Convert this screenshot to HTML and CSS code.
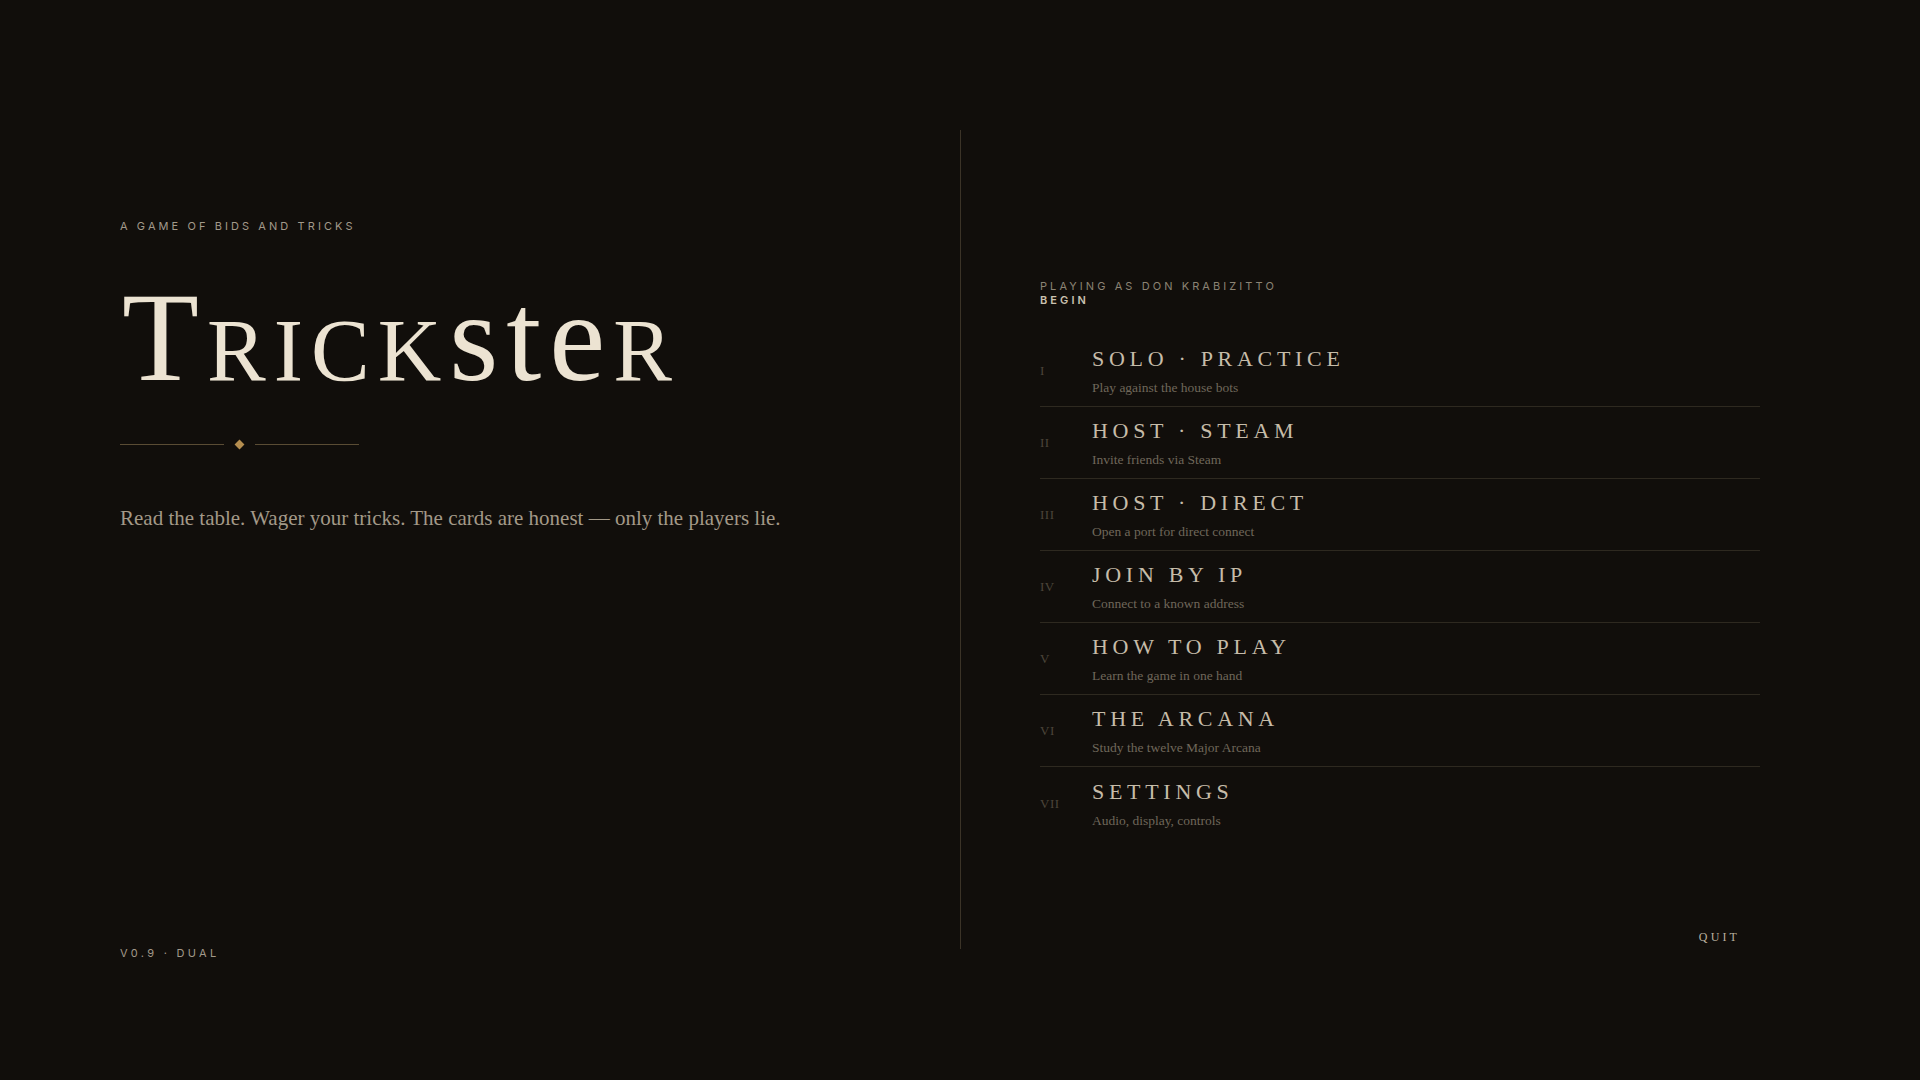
FILE: index.html
```html
<!DOCTYPE html>
<html lang="en">
<head>
<meta charset="utf-8">
<title>Trickster</title>
<link rel="stylesheet" href="styles.css">
</head>
<body>
<div class="screen">
  <section class="intro">
    <p class="eyebrow">A Game of Bids and Tricks</p>
    <h1 class="title">T<span class="sc">rick</span>ste<span class="sc">r</span></h1>
    <div class="ornament"><span class="rule"></span><span class="diamond"></span><span class="rule"></span></div>
    <p class="lede">Read the table. Wager your tricks. The cards are honest — only the players lie.</p>
    <p class="version">v0.9 · Dual</p>
  </section>
  <div class="divider"></div>
  <section class="panel">
    <p class="player">Playing as Don Krabizitto</p>
    <p class="begin">Begin</p>
    <ul class="menu">
      <li class="item"><span class="num">I</span><div class="text"><span class="label">Solo · Practice</span><span class="desc">Play against the house bots</span></div></li>
      <li class="item"><span class="num">II</span><div class="text"><span class="label">Host · Steam</span><span class="desc">Invite friends via Steam</span></div></li>
      <li class="item"><span class="num">III</span><div class="text"><span class="label">Host · Direct</span><span class="desc">Open a port for direct connect</span></div></li>
      <li class="item"><span class="num">IV</span><div class="text"><span class="label">Join by IP</span><span class="desc">Connect to a known address</span></div></li>
      <li class="item"><span class="num">V</span><div class="text"><span class="label">How to Play</span><span class="desc">Learn the game in one hand</span></div></li>
      <li class="item"><span class="num">VI</span><div class="text"><span class="label">The Arcana</span><span class="desc">Study the twelve Major Arcana</span></div></li>
      <li class="item"><span class="num">VII</span><div class="text"><span class="label">Settings</span><span class="desc">Audio, display, controls</span></div></li>
    </ul>
    <div class="footer"><button class="quit">Quit</button></div>
  </section>
</div>
</body>
</html>
```
FILE: styles.css
```css
* { box-sizing: border-box; }
html, body { margin: 0; padding: 0; }
body {
  background: #110e0b;
  width: 1920px;
  height: 1080px;
  overflow: hidden;
  font-family: "Liberation Serif", "DejaVu Serif", serif;
}
p { margin: 0; }

.screen {
  display: grid;
  grid-template-columns: 960px 1px 1fr;
  height: 1080px;
}

/* left column */
.intro {
  display: flex;
  flex-direction: column;
  align-items: flex-start;
  padding: 219px 0 120px 120px;
  height: 1080px;
}
.eyebrow, .version, .player, .begin {
  font-family: Inter, "Liberation Sans", sans-serif;
  font-size: 11px;
  line-height: 14px;
  letter-spacing: 0.28em;
  text-transform: uppercase;
  color: #a2998a;
}
.title {
  margin: 42px 0 0;
  padding-left: 2px;
  font-family: "Liberation Serif", serif;
  font-weight: 400;
  font-size: 126px;
  line-height: 126px;
  color: #ece3d2;
  letter-spacing: 8px;
}
.sc { font-variant: small-caps; }

.ornament {
  display: flex;
  align-items: center;
  margin-top: 38px;
  height: 10px;
}
.rule {
  width: 104px;
  height: 1px;
  background: #5a4c34;
}
.diamond {
  width: 7px;
  height: 7px;
  margin: 0 12px;
  background: #b48d4f;
  transform: rotate(45deg);
}
.lede {
  margin-top: 54px;
  font-size: 21px;
  line-height: 30px;
  color: #a39988;
}
.version {
  margin-top: auto;
  letter-spacing: 0.3em;
}

/* divider */
.divider {
  margin: 130px 0 131px;
  background: #3b3327;
}

/* right column */
.panel {
  display: flex;
  flex-direction: column;
  padding: 280px 160px 0 79px;
}
.player {
  line-height: 13.5px;
  color: #8b8374;
}
.begin {
  line-height: 13.5px;
  font-weight: 600;
  color: #cbc2b0;
}
.menu {
  list-style: none;
  margin: 28px 0 0;
  padding: 0;
}
.item {
  display: grid;
  grid-template-columns: 52px 1fr;
  align-items: center;
  height: 72px;
  padding: 10px 0 9px;
  border-bottom: 1px solid #2e2920;
}
.item:last-child { border-bottom: none; }
.num {
  font-size: 13px;
  color: #4c453a;
  letter-spacing: 0.04em;
}
.text {
  display: flex;
  flex-direction: column;
}
.label {
  font-size: 22px;
  line-height: 28px;
  letter-spacing: 4.7px;
  text-transform: uppercase;
  color: #c6bca9;
}
.desc {
  margin-top: 6px;
  font-size: 13.5px;
  line-height: 18px;
  color: #6f675a;
}
.footer {
  display: flex;
  justify-content: flex-end;
  margin-top: 82px;
}
.quit {
  background: none;
  border: none;
  padding: 8px 20px 8px 16px;
  font-family: "Liberation Serif", serif;
  font-size: 12px;
  line-height: 16px;
  letter-spacing: 0.26em;
  text-transform: uppercase;
  color: #b9b09f;
  cursor: pointer;
}
```
